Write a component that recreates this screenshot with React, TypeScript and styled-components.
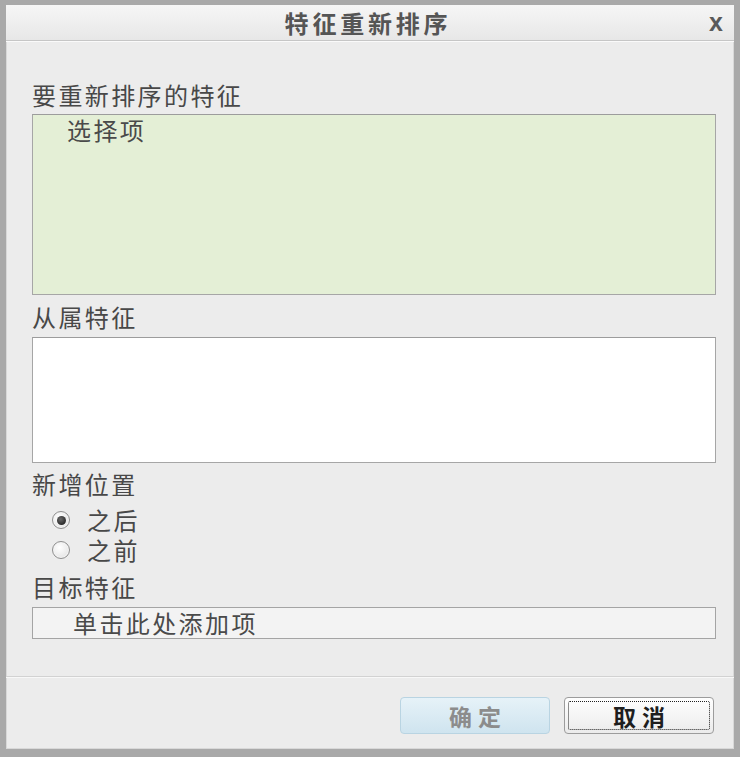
import React from "react";
import styled, { createGlobalStyle } from "styled-components";

const GlobalStyle = createGlobalStyle`
  html, body { margin: 0; padding: 0; background: #ececec; }
  * { box-sizing: border-box; }
`;

const FONT = `"Noto Sans CJK SC", "Noto Sans", sans-serif`;

const Window = styled.div`
  width: 740px;
  height: 757px;
  display: flex;
  flex-direction: column;
  border-style: solid;
  border-color: #a9a9a9;
  border-width: 5px 6px 8px 6px;
  background: #ececec;
  box-shadow: inset 1px 0 0 #d8d8d8, inset -1px 0 0 #d8d8d8, inset 0 -1px 0 #d8d8d8;
  font-family: ${FONT};
  color: #464646;
`;

const TitleBar = styled.div`
  position: relative;
  height: 36px;
  flex: none;
  display: flex;
  align-items: center;
  justify-content: center;
  background: linear-gradient(#f6f6f6, #e7e7e7);
  border-bottom: 1px solid #c6c6c6;
`;

const Title = styled.div`
  font-size: 24px;
  font-weight: 700;
  letter-spacing: 3.8px;
  line-height: 30px;
  color: #555;
  margin-left: -4px;
`;

const Close = styled.div`
  position: absolute;
  right: 11px;
  top: 2px;
  font-family: "Liberation Sans", Arial, sans-serif;
  font-size: 25px;
  line-height: 30px;
  font-weight: 700;
  color: #5a5a5a;
`;

const Content = styled.div`
  flex: 1;
  display: flex;
  flex-direction: column;
  padding: 39px 18px 0 26px;
  border-top: 1px solid #fafafa;
`;

const Label = styled.div<{ $mt?: number }>`
  font-size: 24px;
  line-height: 28px;
  letter-spacing: 2.4px;
  color: #484848;
  margin-top: ${(p) => p.$mt ?? 0}px;
`;

const ListBox = styled.div<{ $h: number; $bg: string; $mt?: number }>`
  height: ${(p) => p.$h}px;
  margin-top: ${(p) => p.$mt ?? 0}px;
  background: ${(p) => p.$bg};
  border: 1px solid #a6a6a6;
  border-top-color: #9c9c9c;
  padding: 1px 0 0 34px;
  font-size: 24px;
  line-height: 28px;
  letter-spacing: 2.4px;
  color: #4a4a4a;
`;

const RadioGroup = styled.div`
  margin-top: 7px;
  display: flex;
  flex-direction: column;
  padding-left: 20px;
`;

const RadioRow = styled.label`
  height: 30px;
  display: flex;
  align-items: center;
  gap: 17px;
  font-size: 24px;
  line-height: 26px;
  letter-spacing: 2.4px;
  color: #484848;
`;

const RadioCircle = styled.span<{ $checked?: boolean }>`
  flex: none;
  width: 18px;
  height: 18px;
  border-radius: 50%;
  border: 1px solid #8f8f8f;
  box-shadow: inset 0 0 0 1px #f4f4f4;
  background: radial-gradient(circle at 40% 35%, #ffffff, #dedede);
  display: flex;
  align-items: center;
  justify-content: center;
  &::after {
    content: "";
    display: ${(p) => (p.$checked ? "block" : "none")};
    width: 9px;
    height: 9px;
    border-radius: 50%;
    background: radial-gradient(circle at 40% 35%, #6a6a6a, #111);
  }
`;

const InputBox = styled.div`
  margin-top: 6px;
  height: 32px;
  background: #f3f3f3;
  border: 1px solid #a4a4a4;
  padding-left: 40px;
  display: flex;
  align-items: center;
  font-size: 24px;
  line-height: 28px;
  letter-spacing: 2.4px;
  color: #4a4a4a;
`;

const Footer = styled.div`
  flex: none;
  height: 73px;
  border-top: 1px solid #d2d2d2;
  box-shadow: inset 0 1px 0 #f8f8f8;
  display: flex;
  justify-content: flex-end;
  align-items: flex-start;
  gap: 14px;
  padding: 20px 20px 0 0;
`;

const Button = styled.button<{ $primary?: boolean }>`
  width: 150px;
  height: 37px;
  border-radius: 4px;
  font-family: ${FONT};
  font-size: 23px;
  line-height: 28px;
  font-weight: 700;
  letter-spacing: 6px;
  text-indent: 6px;
  padding: 0;
  position: relative;
  cursor: default;
  border: 1px solid ${(p) => (p.$primary ? "#b9d4e2" : "#9c9c9c")};
  color: ${(p) => (p.$primary ? "#8c8c8c" : "#1e1e1e")};
  background: ${(p) =>
    p.$primary
      ? "linear-gradient(#e6f2f8, #cfe4ef)"
      : "linear-gradient(#ffffff, #ebebeb)"};
  &::after {
    content: "";
    display: ${(p) => (p.$primary ? "none" : "block")};
    position: absolute;
    inset: 3px;
    border: 1px dotted #222;
    border-radius: 2px;
  }
`;

export default function App() {
  return (
    <>
      <GlobalStyle />
      <Window>
        <TitleBar>
          <Title>特征重新排序</Title>
          <Close>x</Close>
        </TitleBar>
        <Content>
          <Label>要重新排序的特征</Label>
          <ListBox $h={181} $bg="#e4efd6" $mt={5}>
            选择项
          </ListBox>
          <Label $mt={8}>从属特征</Label>
          <ListBox $h={126} $bg="#ffffff" $mt={6} />
          <Label $mt={7}>新增位置</Label>
          <RadioGroup>
            <RadioRow>
              <RadioCircle $checked />
              之后
            </RadioRow>
            <RadioRow>
              <RadioCircle />
              之前
            </RadioRow>
          </RadioGroup>
          <Label $mt={8}>目标特征</Label>
          <InputBox>单击此处添加项</InputBox>
        </Content>
        <Footer>
          <Button $primary>确定</Button>
          <Button>取消</Button>
        </Footer>
      </Window>
    </>
  );
}
